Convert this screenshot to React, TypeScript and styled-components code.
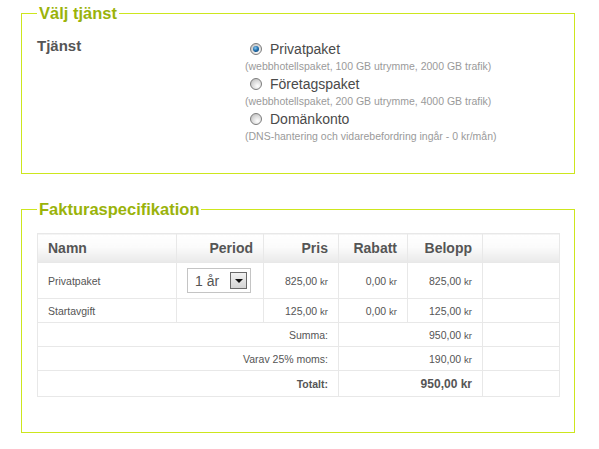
import React from "react";
import styled, { createGlobalStyle } from "styled-components";

const GlobalStyle = createGlobalStyle`
  html, body { margin: 0; padding: 0; background: #fff; }
  body { font-family: "Liberation Sans", Arial, sans-serif; color: #555; }
`;

const Page = styled.div`
  padding: 4px 0 0 21px;
`;

const Box = styled.fieldset<{ $pad: string; $gap?: number }>`
  box-sizing: border-box;
  width: 554px;
  min-width: 0;
  margin: ${(p) => p.$gap ?? 0}px 0 0 0;
  padding: ${(p) => p.$pad};
  border: 1px solid #cde61e;
`;

const Legend = styled.legend`
  padding: 0 2px;
  font-size: 16.5px;
  line-height: 18px;
  font-weight: bold;
  color: #9ab30a;
`;

const ServiceGrid = styled.div`
  display: grid;
  grid-template-columns: 208px 1fr;
`;

const FieldLabel = styled.div`
  font-size: 15px;
  line-height: 14px;
  font-weight: bold;
  color: #555;
`;

const Options = styled.div`
  display: flex;
  flex-direction: column;
`;

const OptionRow = styled.label`
  display: flex;
  align-items: center;
  height: 20px;
  font-size: 14px;
  color: #4a4a4a;
`;

const Radio = styled.input.attrs({ type: "radio" })`
  appearance: none;
  box-sizing: border-box;
  width: 12px;
  height: 12px;
  margin: 0 8px 0 5px;
  border-radius: 50%;
  border: 1px solid #7c7c7c;
  background: radial-gradient(circle at 65% 70%, #ffffff 0%, #dcdcdc 50%, #b4b4b4 100%);
  display: grid;
  place-items: center;
  &:checked::after {
    content: "";
    width: 6px;
    height: 6px;
    border-radius: 50%;
    background: radial-gradient(circle at 40% 35%, #8ccaf2 0%, #2372b0 45%, #0a3560 100%);
  }
`;

const Note = styled.div`
  height: 15px;
  font-size: 10.5px;
  line-height: 15px;
  color: #9a9a9a;
`;

const Table = styled.table`
  width: 522px;
  table-layout: fixed;
  border-collapse: collapse;
  border: 1px solid #e8e8e8;
`;

const HeadCell = styled.th<{ $left?: boolean }>`
  height: 28px;
  padding: 0 10px;
  border: 1px solid #e8e8e8;
  background: linear-gradient(#ffffff 0%, #fbfbfb 45%, #e9e9e9 100%);
  font-size: 14px;
  font-weight: bold;
  color: #555;
  text-align: ${(p) => (p.$left ? "left" : "right")};
`;

const Cell = styled.td<{ $left?: boolean; $h: number; $strong?: boolean }>`
  height: ${(p) => p.$h}px;
  padding: 0 10px;
  border: 1px solid #e8e8e8;
  font-size: 10.5px;
  font-weight: ${(p) => (p.$strong ? "bold" : "normal")};
  color: #555;
  text-align: ${(p) => (p.$left ? "left" : "right")};
  white-space: nowrap;
`;

const Unit = styled.span`
  font-size: 9.5px;
`;

const Total = styled.span`
  font-size: 12px;
  font-weight: bold;
  color: #555;
`;

const SelectBox = styled.div`
  box-sizing: border-box;
  display: inline-flex;
  align-items: center;
  justify-content: space-between;
  width: 64px;
  height: 25px;
  margin-right: 2px;
  padding: 0 3px 0 7px;
  border: 1px solid #c4c4c4;
  background: #fff;
  font-size: 14px;
  color: #555;
`;

const SelectButton = styled.span`
  box-sizing: border-box;
  width: 17px;
  height: 17px;
  border: 1px solid #6a6a6a;
  background: linear-gradient(#f2f2f2, #d4d4d4);
  display: grid;
  place-items: center;
  &::after {
    content: "";
    width: 0;
    height: 0;
    border-left: 4px solid transparent;
    border-right: 4px solid transparent;
    border-top: 4px solid #111;
  }
`;

const services = [
  { name: "Privatpaket", note: "(webbhotellspaket, 100 GB utrymme, 2000 GB trafik)", checked: true },
  { name: "Företagspaket", note: "(webbhotellspaket, 200 GB utrymme, 4000 GB trafik)", checked: false },
  { name: "Domänkonto", note: "(DNS-hantering och vidarebefordring ingår - 0 kr/mån)", checked: false },
];

const Money = ({ v }: { v: string }) => (
  <>
    {v} <Unit>kr</Unit>
  </>
);

export default function App() {
  return (
    <>
      <GlobalStyle />
      <Page>
        <Box $pad="17px 15px 29px">
          <Legend>Välj tjänst</Legend>
          <ServiceGrid>
            <FieldLabel>Tjänst</FieldLabel>
            <Options>
              {services.map((s) => (
                <div key={s.name}>
                  <OptionRow>
                    <Radio name="tjanst" defaultChecked={s.checked} />
                    {s.name}
                  </OptionRow>
                  <Note>{s.note}</Note>
                </div>
              ))}
            </Options>
          </ServiceGrid>
        </Box>

        <Box $pad="15px 15px 35px" $gap={26}>
          <Legend>Fakturaspecifikation</Legend>
          <Table>
            <colgroup>
              <col style={{ width: 139 }} />
              <col style={{ width: 87 }} />
              <col style={{ width: 75 }} />
              <col style={{ width: 69 }} />
              <col style={{ width: 75 }} />
              <col style={{ width: 77 }} />
            </colgroup>
            <thead>
              <tr>
                <HeadCell $left>Namn</HeadCell>
                <HeadCell>Period</HeadCell>
                <HeadCell>Pris</HeadCell>
                <HeadCell>Rabatt</HeadCell>
                <HeadCell>Belopp</HeadCell>
                <HeadCell />
              </tr>
            </thead>
            <tbody>
              <tr>
                <Cell $left $h={35}>Privatpaket</Cell>
                <Cell $h={35}>
                  <SelectBox>
                    1 år
                    <SelectButton />
                  </SelectBox>
                </Cell>
                <Cell $h={35}><Money v="825,00" /></Cell>
                <Cell $h={35}><Money v="0,00" /></Cell>
                <Cell $h={35}><Money v="825,00" /></Cell>
                <Cell $h={35} />
              </tr>
              <tr>
                <Cell $left $h={23}>Startavgift</Cell>
                <Cell $h={23} />
                <Cell $h={23}><Money v="125,00" /></Cell>
                <Cell $h={23}><Money v="0,00" /></Cell>
                <Cell $h={23}><Money v="125,00" /></Cell>
                <Cell $h={23} />
              </tr>
              <tr>
                <Cell $h={23} colSpan={3}>Summa:</Cell>
                <Cell $h={23} colSpan={2}><Money v="950,00" /></Cell>
                <Cell $h={23} />
              </tr>
              <tr>
                <Cell $h={23} colSpan={3}>Varav 25% moms:</Cell>
                <Cell $h={23} colSpan={2}><Money v="190,00" /></Cell>
                <Cell $h={23} />
              </tr>
              <tr>
                <Cell $h={25} colSpan={3} $strong>Totalt:</Cell>
                <Cell $h={25} colSpan={2}><Total>950,00 kr</Total></Cell>
                <Cell $h={25} />
              </tr>
            </tbody>
          </Table>
        </Box>
      </Page>
    </>
  );
}
